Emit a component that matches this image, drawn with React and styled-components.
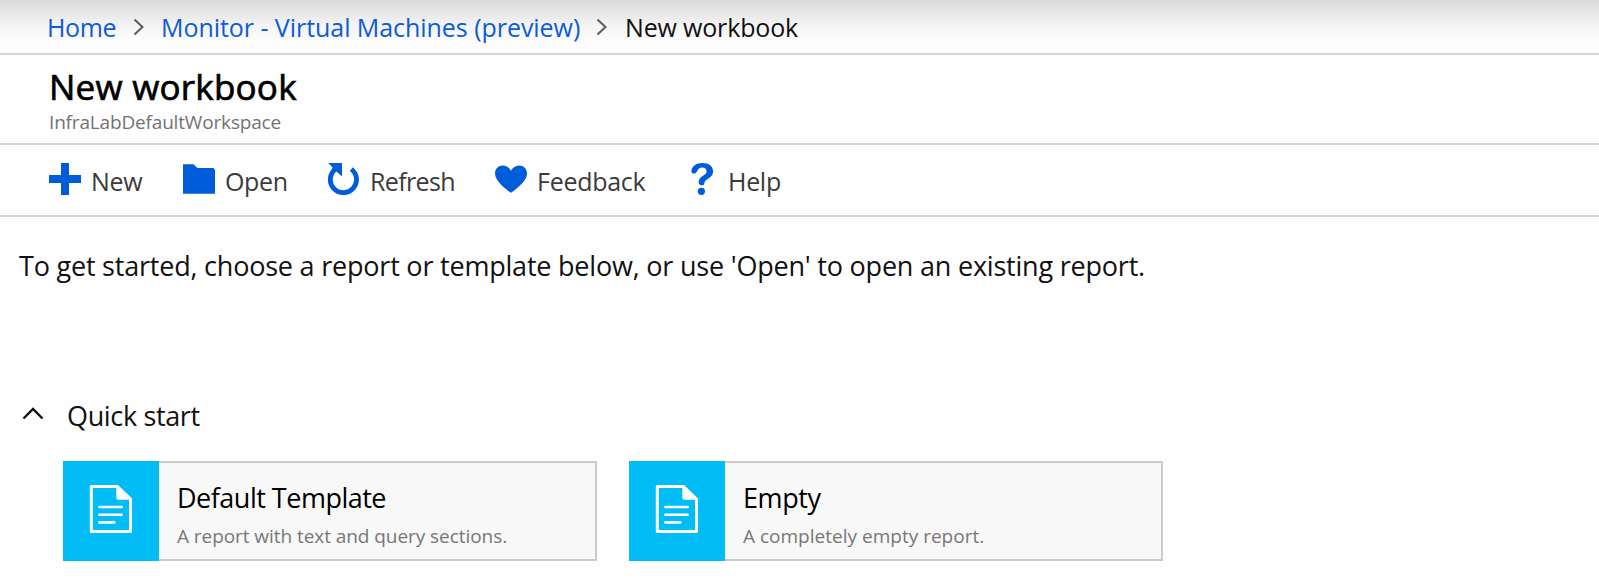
import React from "react";
import styled, { createGlobalStyle } from "styled-components";

const GlobalStyle = createGlobalStyle`
  * { box-sizing: border-box; }
  body {
    margin: 0;
    background: #fefefe;
    color: #000;
    font-family: "Segoe UI", "Open Sans", "Noto Sans", sans-serif;
    overflow: hidden;
  }
`;

const Page = styled.div`
  height: 584px;
  display: flex;
  flex-direction: column;
`;

const Breadcrumb = styled.nav`
  display: flex;
  align-items: center;
  height: 55px;
  padding: 0 0 0 47px;
  border-bottom: 2px solid #d6d6d6;
  background: linear-gradient(#dadada 0, #e4e4e4 10px, #f4f4f4 25px, #fbfbfb 38px, #fefefe 50px);
`;

const Crumb = styled.span`
  font-size: 25px;
  line-height: 34px;
  white-space: nowrap;
  width: ${(p) => p.$width}px;
  letter-spacing: ${(p) => p.$track}px;
  color: ${(p) => (p.$current ? "#111" : "#0b5cd8")};
`;

const Separator = styled.svg`
  flex: none;
  width: 12px;
  height: 18px;
  margin: 1px ${(p) => p.$after}px 0 ${(p) => p.$before}px;
  fill: none;
  stroke: #5c5c5c;
  stroke-width: 2;
`;

const Header = styled.header`
  height: 90px;
  padding: 9px 0 0 49px;
  border-bottom: 2px solid #d6d6d6;
`;

const Title = styled.h1`
  margin: 0;
  font-size: 35px;
  font-weight: 400;
  line-height: 46px;
  letter-spacing: ${(p) => p.$track}px;
  -webkit-text-stroke: 0.7px #000;
`;

const Subtitle = styled.div`
  font-size: 19px;
  line-height: 24px;
  color: #737373;
  letter-spacing: ${(p) => p.$track}px;
`;

const Toolbar = styled.div`
  display: grid;
  grid-template-columns: 134px 145px 167px 191px auto;
  justify-content: start;
  height: 72px;
  padding: 18px 0 0 49px;
  border-bottom: 2px solid #d6d6d6;
`;

const Command = styled.button`
  display: flex;
  gap: 10px;
  padding: 0;
  border: 0;
  background: none;
  font: inherit;
  color: #3b3b3b;
  font-size: 25px;
  line-height: 36px;
  white-space: nowrap;
  text-align: left;
  letter-spacing: ${(p) => p.$track}px;
`;

const CommandIcon = styled.svg`
  flex: none;
  width: 32px;
  height: 32px;
  fill: #015cda;
`;

const Intro = styled.p`
  margin: 30px 0 0 19px;
  font-size: 27px;
  line-height: 38px;
  white-space: nowrap;
  letter-spacing: ${(p) => p.$track}px;
  color: #111;
`;

const SectionHeader = styled.div`
  display: flex;
  align-items: center;
  margin-top: 112px;
  padding-left: 22px;
  height: 38px;
`;

const Caret = styled.svg`
  width: 22px;
  height: 14px;
  margin-bottom: 5px;
  fill: none;
  stroke: #111;
  stroke-width: 2.4;
`;

const SectionTitle = styled.h2`
  margin: 0 0 0 23px;
  font-size: 27px;
  font-weight: 400;
  line-height: 38px;
  color: #111;
  letter-spacing: ${(p) => p.$track}px;
`;

const Cards = styled.div`
  display: flex;
  gap: 32px;
  margin: 26px 0 0 63px;
`;

const Card = styled.article`
  display: flex;
  width: 534px;
  height: 100px;
`;

const CardTile = styled.div`
  flex: none;
  width: 96px;
  padding: 24px 0 0 26px;
  background: #02bcf5;
`;

const CardBody = styled.div`
  flex: 1;
  padding: 16px 0 0 18px;
  border: 2px solid #cbcbcb;
  border-left: 0;
  background: #f8f8f8;
`;

const CardTitle = styled.div`
  font-size: 27px;
  line-height: 38px;
  letter-spacing: ${(p) => p.$track}px;
`;

const CardText = styled.div`
  margin-top: 5px;
  font-size: 19px;
  line-height: 28px;
  color: #777;
  white-space: nowrap;
  letter-spacing: ${(p) => p.$track}px;
`;

const DocGlyph = styled.svg`
  display: block;
  width: 44px;
  height: 48px;
  fill: none;
  stroke: #fff;
  stroke-width: 3;
`;

const DocIcon = () => (
  <DocGlyph viewBox="0 0 44 48">
    <path d="M2.3 1.6H28.5L41.5 14V46.4H2.3Z" strokeLinejoin="round" />
    <path d="M27.3 1L42 14.8H29.3Q27.3 14.8 27.3 13Z" fill="#fff" stroke="none" />
    <path d="M10.4 22H32.6M10.4 29.7H32.6M10.4 37.4H25.2" strokeWidth="2.6" strokeLinecap="round" />
  </DocGlyph>
);

const Chevron = ({ before, after }) => (
  <Separator viewBox="0 0 12 18" $before={before} $after={after}>
    <path d="M1.5 1.5L9.5 9L1.5 16.5" />
  </Separator>
);

const icons = {
  New: <path d="M12 0h8v12h12v8H20v12h-8V20H0v-8h12z" />,
  Open: <path d="M0 1.2H10.5L14.3 5H30.5L32 7V30.7H0Z" />,
  Refresh: (
    <>
      <path d="M0 0H14V13.6L8.4 8.4L4 7.2L4.4 4.2Z" />
      <path d="M6.9 6.6A13.1 13.1 0 1 0 23.3 6.1" fill="none" stroke="#015cda" strokeWidth="4.8" />
    </>
  ),
  Feedback: <path d="M16 29.8C12 27 0 18.5 0 10.5C0 5.5 3.6 2.5 7.8 2.5C11.5 2.5 14.3 4.6 16 7.8C17.7 4.6 20.5 2.5 24.2 2.5C28.4 2.5 32 5.5 32 10.5C32 18.5 20 27 16 29.8Z" />,
  Help: (
    <>
      <path d="M5.4 8C6 3 10 0 16.5 0C23 0 27.1 3.4 27.1 8.6C27.1 15.5 18.6 15.5 18.4 20.2C18.3 23.2 12.6 23.2 12.6 19.6C12.6 12.5 20.6 12.8 20.6 8.6C20.6 5.8 18.8 4.6 16.2 4.6C10.5 4.6 12 10.6 8.2 10.6C6.4 10.6 5.3 9.6 5.4 8Z" />
      <circle cx="15.4" cy="28.3" r="3.6" />
    </>
  ),
};

const commands = [
  { label: "New", track: -0.3 },
  { label: "Open", track: -0.35 },
  { label: "Refresh", track: -0.65 },
  { label: "Feedback", track: -0.27 },
  { label: "Help", track: -0.3 },
];

const templates = [
  { title: "Default Template", text: "A report with text and query sections.", titleTrack: -0.5, textTrack: -0.06 },
  { title: "Empty", text: "A completely empty report.", titleTrack: -0.4, textTrack: 0.01 },
];

export default function App() {
  return (
    <Page>
      <GlobalStyle />
      <Breadcrumb>
        <Crumb $width={70} $track={-0.4}>Home</Crumb>
        <Chevron before={16} after={16} />
        <Crumb $width={420} $track={-0.05}>Monitor - Virtual Machines (preview)</Crumb>
        <Chevron before={15} after={17} />
        <Crumb $current $width={180} $track={-0.17}>New workbook</Crumb>
      </Breadcrumb>
      <Header>
        <Title $track={0.23}>New workbook</Title>
        <Subtitle $track={-0.17}>InfraLabDefaultWorkspace</Subtitle>
      </Header>
      <Toolbar>
        {commands.map((c) => (
          <Command key={c.label} $track={c.track}>
            <CommandIcon viewBox="0 0 32 32">{icons[c.label]}</CommandIcon>
            {c.label}
          </Command>
        ))}
      </Toolbar>
      <Intro $track={-0.21}>
        To get started, choose a report or template below, or use 'Open' to open an existing report.
      </Intro>
      <SectionHeader>
        <Caret viewBox="0 0 22 14">
          <path d="M1.5 11.5L11 2L20.5 11.5" />
        </Caret>
        <SectionTitle $track={-0.35}>Quick start</SectionTitle>
      </SectionHeader>
      <Cards>
        {templates.map((t) => (
          <Card key={t.title}>
            <CardTile>
              <DocIcon />
            </CardTile>
            <CardBody>
              <CardTitle $track={t.titleTrack}>{t.title}</CardTitle>
              <CardText $track={t.textTrack}>{t.text}</CardText>
            </CardBody>
          </Card>
        ))}
      </Cards>
    </Page>
  );
}
